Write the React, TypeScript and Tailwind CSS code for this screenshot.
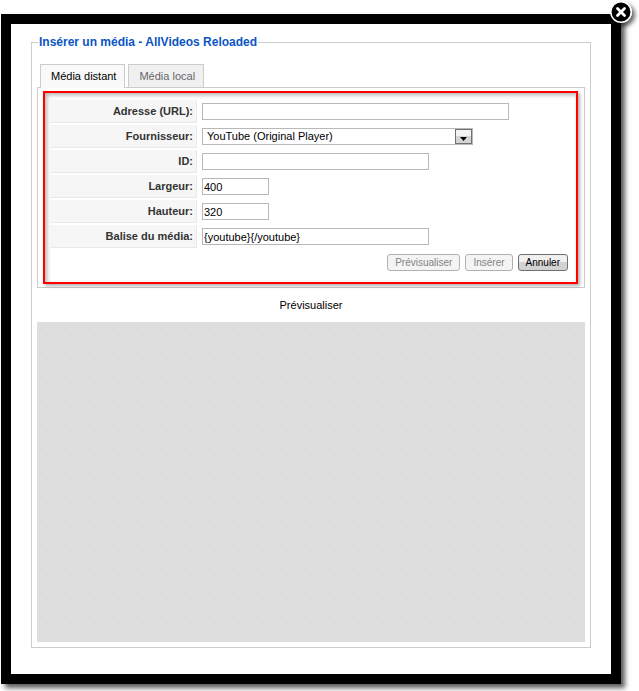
import { useState } from "react";
import type { ReactNode } from "react";

const inputClass = "h-[17px] border border-[#b8b8b8] bg-white px-px text-[11px] text-black outline-none";

const Row = ({ id, label, children }: { id: string; label: string; children: ReactNode }) => (
  <div className="flex items-center gap-[5px]">
    <label
      htmlFor={id}
      className="h-[23px] w-[147px] shrink-0 border-r border-b border-[#e9e9e9] bg-[#f6f6f6] pr-[3px] text-right text-[11px] leading-[22px] font-bold text-[#333]"
    >
      {label}
    </label>
    {children}
  </div>
);

const CloseButton = () => (
  <button
    type="button"
    aria-label="Fermer"
    className="absolute -top-[23px] -right-[21px] size-[22px] rounded-full shadow-[3px_3px_4px_rgba(0,0,0,0.6)]"
  >
    <svg viewBox="0 0 22 22" className="size-[22px]">
      <circle cx="11" cy="11" r="10.2" fill="#000" stroke="#fff" strokeWidth="1.5" />
      <path d="M7.5 7.5l7 7M14.5 7.5l-7 7" stroke="#fff" strokeWidth="2.8" strokeLinecap="round" />
    </svg>
  </button>
);

/* Grey player placeholder with a sparse speckle */
const PreviewArea = () => (
  <div className="h-[320px] bg-[#dedede]">
    <svg width="100%" height="100%" aria-hidden="true">
      <defs>
        <pattern id="speckle" width="24" height="24" patternUnits="userSpaceOnUse">
          <g fill="#cfcfcf">
            <rect x="2" y="1" width="1" height="1" />
            <rect x="10" y="3" width="1" height="1" />
            <rect x="18" y="0" width="1" height="1" />
            <rect x="5" y="8" width="1" height="1" />
            <rect x="14" y="7" width="1" height="1" />
            <rect x="21" y="10" width="1" height="1" />
            <rect x="1" y="14" width="1" height="1" />
            <rect x="9" y="13" width="1" height="1" />
            <rect x="17" y="15" width="1" height="1" />
            <rect x="6" y="20" width="1" height="1" />
            <rect x="13" y="19" width="1" height="1" />
            <rect x="22" y="20" width="1" height="1" />
          </g>
        </pattern>
      </defs>
      <rect x="4" y="4" width="98.5%" height="97.5%" fill="url(#speckle)" />
    </svg>
  </div>
);

const App = () => {
  const [tab, setTab] = useState("distant");

  const tabClass = (name: string) =>
    tab === name
      ? "-mb-px h-6 border border-b-0 border-[#ccc] bg-[#f9f9f9] pr-2 pl-[10px] text-black"
      : "h-[23px] border border-b-0 border-[#ccc] bg-[#f0f0f0] pr-2 pl-[10px] text-[#666]";

  return (
    <div className="bg-white pt-[14px] pr-[18px] pb-[7px] pl-px font-['Liberation_Sans',Arial,sans-serif] text-[11px] text-black">
      <main className="relative border-10 border-black bg-white px-5 pt-[10px] pb-[26px] shadow-[4px_4px_5px_rgba(0,0,0,0.65)]">
        <CloseButton />

        <fieldset className="min-w-0 border border-[#ccc] px-[5px] pb-[5px]">
          <legend className="ml-px px-px text-[12px] leading-4 font-bold text-[#0b55c4]">
            Insérer un média - AllVideos Reloaded
          </legend>

          <div role="tablist" className="mt-[14px] ml-[3px] flex items-start gap-[3px]">
            <button type="button" role="tab" aria-selected={tab === "distant"} onClick={() => setTab("distant")} className={tabClass("distant")}>
              Média distant
            </button>
            <button type="button" role="tab" aria-selected={tab === "local"} onClick={() => setTab("local")} className={tabClass("local")}>
              Média local
            </button>
          </div>

          <div className="border border-[#ccc] py-[3px] pr-[6px] pl-[5px]">
            {/* Highlighted form */}
            <form className="border-2 border-[#f00] pt-[7px] pr-2 pb-[11px] pl-[5px] shadow-[2px_2px_3px_rgba(0,0,0,0.3),inset_2px_2px_4px_rgba(0,0,0,0.3)]">
              <div className="flex flex-col gap-[2px]">
                <Row id="url" label="Adresse (URL):">
                  <input id="url" type="text" className={`${inputClass} w-[307px]`} />
                </Row>
                <Row id="provider" label="Fournisseur:">
                  <div className="relative">
                    <select id="provider" className="block h-[17px] w-[271px] appearance-none border border-[#b8b8b8] bg-white pl-1 text-[11px] leading-[15px] text-black outline-none">
                      <option>YouTube (Original Player)</option>
                    </select>
                    <span className="pointer-events-none absolute top-px right-px flex h-[15px] w-[17px] items-center justify-center border border-[#707070] bg-linear-to-b from-[#f2f2f2] from-50% to-[#d4d4d4] to-50%">
                      <svg viewBox="0 0 7 4" className="mt-1 h-1 w-[7px]">
                        <path d="M0 0h7L3.5 4z" fill="#000" />
                      </svg>
                    </span>
                  </div>
                </Row>
                <Row id="media-id" label="ID:">
                  <input id="media-id" type="text" className={`${inputClass} w-[227px]`} />
                </Row>
                <Row id="width" label="Largeur:">
                  <input id="width" type="text" defaultValue="400" className={`${inputClass} w-[67px]`} />
                </Row>
                <Row id="height" label="Hauteur:">
                  <input id="height" type="text" defaultValue="320" className={`${inputClass} w-[67px]`} />
                </Row>
                <Row id="tag" label="Balise du média:">
                  <input id="tag" type="text" defaultValue="{youtube}{/youtube}" className={`${inputClass} w-[227px]`} />
                </Row>
              </div>

              <div className="mt-[6px] flex justify-end gap-[5px] text-[10px] leading-[15px]">
                <button type="button" disabled className="rounded-[3px] border border-[#adb2b5] bg-[#f4f4f4] px-[7px] text-[#838383]">
                  Prévisualiser
                </button>
                <button type="button" disabled className="rounded-[3px] border border-[#adb2b5] bg-[#f4f4f4] px-[7px] text-[#838383]">
                  Insérer
                </button>
                <button type="button" className="rounded-[3px] border border-[#707070] bg-linear-to-b from-[#f0f0f0] from-50% to-[#d2d2d2] to-50% px-[7px] text-black">
                  Annuler
                </button>
              </div>
            </form>
          </div>

          <p className="py-[9px] text-center leading-4">Prévisualiser</p>
          <PreviewArea />
        </fieldset>
      </main>
    </div>
  );
};

export default App;
